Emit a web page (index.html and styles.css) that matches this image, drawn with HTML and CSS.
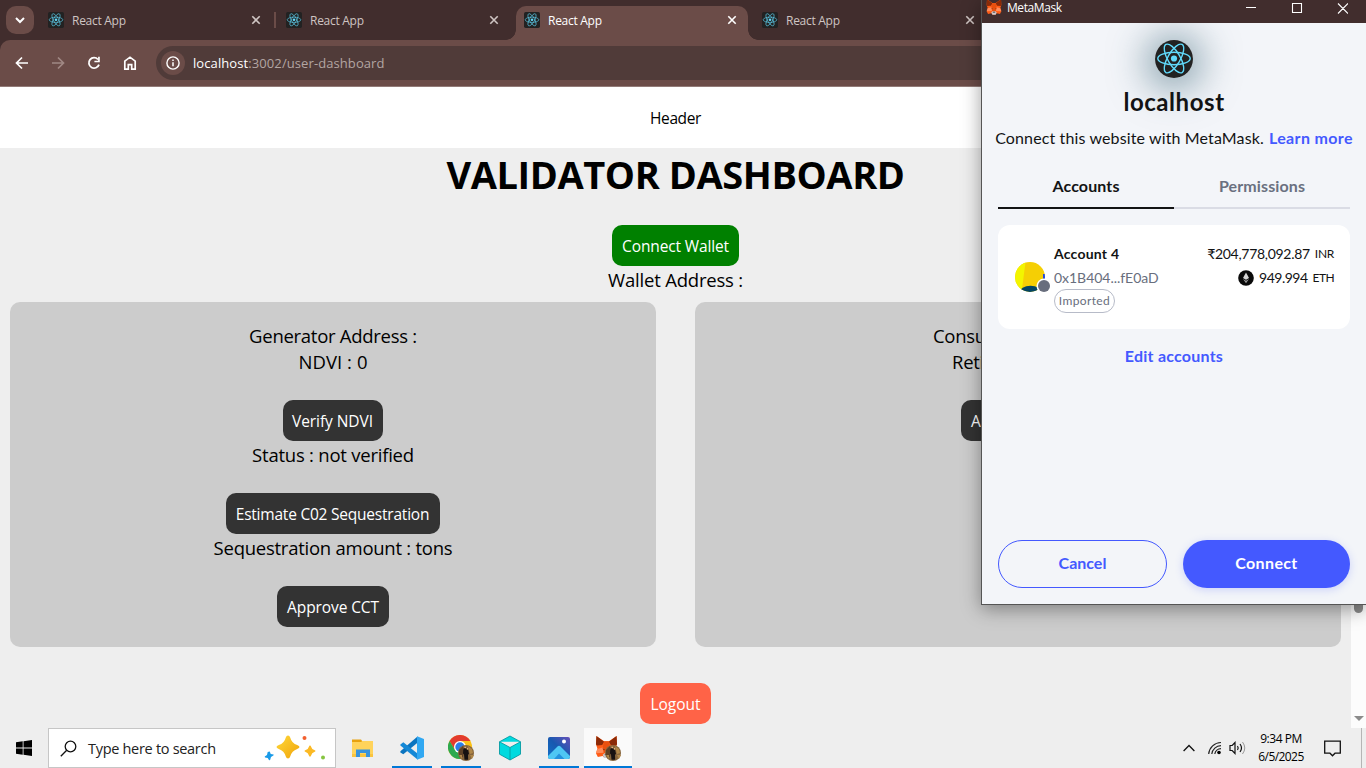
FILE: index.html
```html
<!DOCTYPE html>
<html lang="en">
<head>
<meta charset="utf-8">
<title>React App</title>
<link rel="stylesheet" href="styles.css">
</head>
<body>
<svg class="defs" width="0" height="0">
  <defs>
    <symbol id="atom" viewBox="0 0 38 38">
      <rect width="38" height="38" rx="4" fill="#222"/>
      <g fill="none" stroke="#61dafb" stroke-width="1.4">
        <ellipse cx="19" cy="18.5" rx="16.2" ry="6.2"/>
        <ellipse cx="19" cy="18.5" rx="16.2" ry="6.2" transform="rotate(60 19 18.5)"/>
        <ellipse cx="19" cy="18.5" rx="16.2" ry="6.2" transform="rotate(120 19 18.5)"/>
      </g>
      <circle cx="19" cy="18.5" r="3.1" fill="#61dafb"/>
    </symbol>
    <symbol id="x" viewBox="0 0 10 10"><path d="M1.3 1.3l7.4 7.4M8.7 1.3L1.3 8.7" fill="none" stroke="currentColor" stroke-width="1.6"/></symbol>
    <symbol id="fox" viewBox="0 0 24 24">
      <path fill="#ff5c16" d="M1.500.5L9.500 6h5L22.500.5l.5 8.500-1.500 4.500 1.500 5-2 4-5-1-2 2h-4l-2-2-5 1-2-4 1.500-5L1 9z"/>
      <path fill="#8a2a08" d="M1.500.5L9.500 6.500 7.500 10 2 10.500 1 9zM22.500.5l-8 6 2 3.500 5.500.5L23 9z"/>
      <path fill="#e8500f" d="M9.500 6h5l1.500 7-1 5H9l-1-5z"/>
      <path fill="#ff8d5d" d="M2.500 14L8 12.500 9 18l-8 .5zM21.500 14L16 12.500 15 18l8 .5z"/>
      <path fill="#c9c9ce" d="M8 20l2-1.500h4l2 1.500-1.500 3.500h-5z"/>
      <path fill="#2a1a18" d="M7.500 13.500l2.500 1v1zM16.500 13.500l-2.500 1v1zM10.500 19h3l.5 1.200h-4z"/>
    </symbol>
    <symbol id="badge" viewBox="0 0 16 16">
      <circle cx="8" cy="8" r="8" fill="#86653c"/>
      <path fill="#5c4026" d="M1 5l4-4 1 4-1 7-4-1z"/>
      <path fill="#b08748" d="M10 1l4 3 1 4-3 1zM1 10h3v4zM12 10h4l-2 4z"/>
      <path fill="#161111" d="M6 3h2l.7 1.500L10.200 5l.8 4-1 .8.2 5H6.500L6 9.500 5 8.500 5.200 5z"/>
      <path fill="#e5b080" d="M6.500 1.800H8v1.400H6.500zM9 3h1.200v1.400H9z"/>
    </symbol>
  </defs>
</svg>

<div class="desktop">
  <div class="browser">
    <div class="tabstrip">
      <div class="tab-search"><svg width="10" height="7" viewBox="0 0 10 7"><path d="M1 1l4 4 4-4" fill="none" stroke="#fff" stroke-width="2"/></svg></div>
      <div class="tab divided"><svg class="fav"><use href="#atom"/></svg><span>React App</span><svg class="close"><use href="#x"/></svg></div>
      <div class="tab"><svg class="fav"><use href="#atom"/></svg><span>React App</span><svg class="close"><use href="#x"/></svg></div>
      <div class="tab active"><svg class="fav"><use href="#atom"/></svg><span>React App</span><svg class="close"><use href="#x"/></svg></div>
      <div class="tab"><svg class="fav"><use href="#atom"/></svg><span>React App</span><svg class="close"><use href="#x"/></svg></div>
    </div>
    <div class="toolbar">
      <svg width="14" height="14" viewBox="0 0 14 14"><path d="M13 7H2M7 1.500L1.500 7 7 12.500" fill="none" stroke="#fff" stroke-width="1.700"/></svg>
      <svg width="14" height="14" viewBox="0 0 14 14"><path d="M1 7h11M7 1.500L12.500 7 7 12.500" fill="none" stroke="#a08884" stroke-width="1.700"/></svg>
      <svg width="14" height="14" viewBox="0 0 14 14"><path d="M12 8.600A5.200 5.200 0 1 1 11 3.500" fill="none" stroke="#fff" stroke-width="1.800"/><path d="M12.800 0.800v5.400H7.400v-1.500h3.700V0.800z" fill="#fff"/></svg>
      <svg width="14" height="14" viewBox="0 0 14 14"><path d="M1.800 13.200V5.200L7 1.200l5.200 4v8H8.700V8.700H5.300v4.500z" fill="none" stroke="#fff" stroke-width="1.700"/></svg>
      <div class="omnibox">
        <div class="info"><svg width="14" height="14" viewBox="0 0 14 14"><circle cx="7" cy="7" r="6.100" fill="none" stroke="#fff" stroke-width="1.400"/><path d="M7 6.200v4M7 3.500v1.500" stroke="#fff" stroke-width="1.500"/></svg></div>
        <span class="url"><b>localhost</b>:3002/user-dashboard</span>
      </div>
    </div>
  </div>

  <div class="viewport">
    <main class="page">
      <header class="header">Header</header>
      <h1 class="title">VALIDATOR DASHBOARD</h1>
      <div class="wallet">
        <button class="btn green">Connect Wallet</button>
        <p class="line l-wallet">Wallet Address :</p>
      </div>
      <div class="cards">
        <section class="card">
          <p class="line l-gen">Generator Address :</p>
          <p class="line l-ndvi">NDVI : 0</p>
          <button class="btn b-verify">Verify NDVI</button>
          <p class="line l-status">Status : not verified</p>
          <button class="btn b-est">Estimate C02 Sequestration</button>
          <p class="line l-seq">Sequestration amount : tons</p>
          <button class="btn b-appr">Approve CCT</button>
        </section>
        <section class="card">
          <p class="line cut w-consumer">Consu</p>
          <p class="line cut w-retire">Reti</p>
          <button class="btn cut w-approve">A</button>
        </section>
      </div>
      <button class="btn logout">Logout</button>
    </main>
    <div class="scrollbar"><i class="thumb"></i><i class="arrow"></i></div>
  </div>

  <footer class="taskbar">
    <div class="start"><svg width="16" height="16" viewBox="0 0 16 16"><path d="M0 2.200l6.700-.9v6.300H0zM7.500 1.200L16 0v7.600H7.500zM0 8.400h6.700v6.300L0 13.800zM7.500 8.400H16V16l-8.500-1.200z"/></svg></div>
    <div class="search">
      <svg width="17" height="17" viewBox="0 0 17 17"><circle cx="10.500" cy="6.500" r="5.300" fill="none" stroke="#111" stroke-width="1.300"/><path d="M6.700 10.300L.8 16.200" stroke="#111" stroke-width="1.300"/></svg>
      <span>Type here to search</span>
      <svg class="stars" width="62" height="28" viewBox="0 0 62 28">
        <defs><linearGradient id="gold" x1="0" y1="0" x2="1" y2="1"><stop offset="0" stop-color="#ffd93b"/><stop offset="1" stop-color="#f0a30a"/></linearGradient></defs>
        <path fill="url(#gold)" d="M24 1.500q1.600 0 2.200 2 1.600 6 7 7.500 2.300.8 2.300 2t-2.300 2q-5.400 1.800-7 7.500-.6 2-2.200 2t-2.200-2q-1.600-5.700-7-7.500-2.300-.8-2.300-2t2.300-2q5.400-1.500 7-7.500.6-2 2.200-2z"/>
        <path fill="#fbb924" d="M46 11.500q.8 0 1.100 1.200.7 2.600 3.200 3.300 1.200.4 1.200 1t-1.200 1q-2.500.8-3.200 3.400-.3 1.200-1.100 1.200t-1.100-1.200q-.7-2.600-3.200-3.400-1.200-.4-1.200-1t1.200-1q2.500-.7 3.200-3.300.3-1.200 1.100-1.200z"/>
        <path fill="#1a9be8" d="M5.800 17.500l.9 2.500 2.800.6q.6.600-.2 1L7 23l-.9 3-1 .2-1.400-2.200-2.700-.6-.3-1 2.300-1.400.7-3z"/>
        <circle cx="40.500" cy="4" r="2" fill="#f2602f"/><circle cx="59" cy="23.500" r="2" fill="#86c440"/>
      </svg>
    </div>
    <div class="apps">
      <div class="app"><svg width="24" height="24" viewBox="0 0 24 24"><path fill="#e8a20f" d="M1 3.500h9l1.500 2V9H1z"/><path fill="#ffd35b" d="M1 6h9l1.500-1H22v16H1z"/><path fill="#f9c440" d="M1 18h21v3H1z"/><path fill="#3993dc" d="M5 13.500h14V21h-4v-4H9v4H5z"/></svg></div>
      <div class="app on"><svg width="24" height="24" viewBox="0 0 24 24"><path fill="#0b74bf" d="M17.500.5v6.300L3.300 18.200.4 16.500v-1.300z"/><path fill="#1488d6" d="M.4 8.500L3.300 6.300 17.500 17.500v6L.4 9.500z"/><path fill="#31a8f2" d="M17 .3L24 3v18l-7 2.700z"/></svg></div>
      <div class="app on"><svg width="26" height="26" viewBox="0 0 26 26"><circle cx="12" cy="12" r="12" fill="#fbc116"/><path fill="#e33b2e" d="M1.600 6A12 12 0 0 1 22.400 6H12L7 15z"/><path fill="#2da94f" d="M1.600 6A12 12 0 0 0 12 24l5-9H7z"/><circle cx="12" cy="12" r="6" fill="#fff"/><circle cx="12" cy="12" r="4.700" fill="#2b7de9"/><use href="#badge" x="10" y="10" width="16" height="16"/></svg></div>
      <div class="app"><svg width="24" height="26" viewBox="0 0 24 26"><path fill="#00dadf" stroke="#069ba3" stroke-width=".9" d="M12 1l10.500 5.800v12.400L12 25 1.500 19.200V6.800zM1.500 6.800L12 12.500l10.500-5.700M12 12.500V25"/></svg></div>
      <div class="app on"><svg width="24" height="24" viewBox="0 0 24 24"><defs><linearGradient id="sky" x1="1" y1="0" x2="0" y2="1"><stop offset="0" stop-color="#6650b8"/><stop offset=".5" stop-color="#1859b0"/><stop offset="1" stop-color="#1170c8"/></linearGradient></defs><rect x="1" y="1" width="22" height="22" rx="2" fill="url(#sky)"/><path fill="#4fc7f4" d="M1 20l9.500-9.500q1.500-1.300 3 0L23 20v1q0 2-2 2H3q-2 0-2-2z"/><path fill="#2493df" d="M7 23l5-5.500 5.500 5.500z"/><circle cx="17" cy="5.500" r="2" fill="#fff"/></svg></div>
      <div class="app on focus"><svg width="26" height="26" viewBox="0 0 26 26"><use href="#fox" width="23" height="24"/><use href="#badge" x="10" y="10" width="16" height="16"/></svg></div>
    </div>
    <div class="tray">
      <svg class="up" width="12" height="8" viewBox="0 0 12 8"><path d="M.6 7L6 1.500 11.400 7" fill="none" stroke="#111" stroke-width="1.300"/></svg>
      <svg class="wifi" width="14" height="14" viewBox="0 0 14 14"><g fill="none" stroke="#222" stroke-width="1.200"><path d="M.7 13A12.500 12.500 0 0 1 13 1.500M3.800 13A9.300 9.300 0 0 1 13 4.700M6.800 13A6.300 6.300 0 0 1 13 7.700"/></g><circle cx="11" cy="11.500" r="1.800"/></svg>
      <svg class="vol" width="17" height="14" viewBox="0 0 17 14"><path d="M1 4.500h2.200L6 1.500v11l-2.800-3H1z" fill="none" stroke="#111" stroke-width="1.200"/><path d="M8.500 5q1.400 2 0 4M11 3q3 4 0 8" fill="none" stroke="#111" stroke-width="1.200"/><path d="M13.500 1q4.500 6 0 12" fill="none" stroke="#999" stroke-width="1"/></svg>
      <div class="clock"><span class="time">9:34 PM</span><span class="date">6/5/2025</span></div>
      <svg class="note" width="17" height="17" viewBox="0 0 17 17"><path d="M.7 1.200h15.600v12H11l-2.500 2.600L6 13.200H.7z" fill="none" stroke="#111" stroke-width="1.300"/></svg>
      <i class="peek"></i>
    </div>
  </footer>
</div>

<div class="popup">
  <div class="winbar">
    <svg class="wfox" width="16" height="16"><use href="#fox"/></svg><span>MetaMask</span>
    <svg class="ctl" width="102" height="11" viewBox="0 0 102 11"><path d="M0 4.500h10M46.500.5h9v9h-9zM92 .5l10 10M102 .5l-10 10" fill="none" stroke="#fff" stroke-width="1.100"/></svg>
  </div>
  <div class="site">
    <div class="glow"><svg class="logo"><use href="#atom"/></svg></div>
    <h2>localhost</h2>
    <p class="ask"><span>Connect this website with MetaMask.</span> <a>Learn more</a></p>
  </div>
  <div class="ptabs"><div class="ptab sel">Accounts</div><div class="ptab">Permissions</div></div>
  <div class="acct">
    <div class="avatar">
      <svg width="38" height="34" viewBox="0 0 38 34"><defs><clipPath id="round"><circle cx="15" cy="15" r="15"/></clipPath></defs><g clip-path="url(#round)"><rect width="32" height="32" fill="#f5cf04"/><path d="M0 0h10.500L6.500 31H0z" fill="#f3f500"/><path d="M28 12h4v7h-4z" fill="#2349e0"/><ellipse cx="15.500" cy="30.500" rx="11" ry="6.800" fill="#024563"/></g><circle cx="29" cy="24" r="7.500" fill="#fff"/><circle cx="29" cy="24" r="6" fill="#686e7d"/></svg>
    </div>
    <div class="who"><b>Account 4</b><span class="addr">0x1B404...fE0aD</span><span class="pill">Imported</span></div>
    <div class="bal">
      <div><span class="inr">₹204,778,092.87</span><small>INR</small></div>
      <div><svg width="16" height="16" viewBox="0 0 16 16"><circle cx="8" cy="8" r="7.800" fill="#0a0a0a"/><path fill="#d5d5d5" d="M8 2.500L11 8 8 9.800 5 8z"/><path fill="#999" d="M5 9l3 1.800L11 9l-3 4.300z"/></svg><span class="eth">949.994</span><small class="e">ETH</small></div>
    </div>
  </div>
  <a class="edit">Edit accounts</a>
  <div class="actions"><button class="pbtn ghost">Cancel</button><button class="pbtn solid">Connect</button></div>
</div>
</body>
</html>
```
FILE: styles.css
```css
*{box-sizing:border-box}
body{margin:0;width:1366px;height:768px;overflow:hidden;font-family:"Open Sans","Noto Sans",sans-serif;color:#000;background:#eee}
h1,h2,p{margin:0}
button{border:0;font-family:inherit;white-space:nowrap;padding:0}
svg{flex:none;display:block}
.defs{position:absolute}
.desktop{display:flex;flex-direction:column;height:768px}

/* browser frame */
.browser{flex:none;height:87px;background:#412d2d}
.tabstrip{height:40px;display:flex;padding:6px 0 0 6px}
.tab-search{width:28px;height:28px;border-radius:10px;background:#6b4c48;display:flex;align-items:center;justify-content:center;margin-right:6px}
.tab{flex:none;position:relative;width:232px;margin-right:6px;height:34px;display:flex;align-items:center;padding:0 11px 6px 8px;font-size:12px;letter-spacing:-.28px;color:#cfc5c3}
.tab span{flex:1;margin-left:8px}
.tab.divided::after{content:"";position:absolute;right:-4px;top:6px;width:2px;height:16px;background:#6b4c48}
.fav{width:16px;height:16px}
.close{width:10px;height:10px}
.tab.active{background:#6b4c48;color:#fff;border-radius:10px 10px 0 0}
.tab.active::before,.tab.active::after{content:"";position:absolute;bottom:0;width:10px;height:10px}
.tab.active::before{left:-10px;background:radial-gradient(circle at 0 0,transparent 9.500px,#6b4c48 10px)}
.tab.active::after{right:-10px;background:radial-gradient(circle at 100% 0,transparent 9.500px,#6b4c48 10px)}
.toolbar{height:47px;background:#6b4c48;border-bottom:1px solid #927b78;border-radius:10px 0 0 0;display:flex;align-items:center;gap:22px;padding-left:15px}
.omnibox{flex:1;height:34px;border-radius:17px 0 0 17px;background:#503b39;display:flex;align-items:center;padding-left:5px;margin-left:-3px}
.info{width:24px;height:24px;border-radius:50%;background:#6b4c48;display:flex;align-items:center;justify-content:center}
.url{margin-left:8px;font-size:13px;letter-spacing:.09px;color:#b3a5a2}
.url b{font-weight:400;color:#fff}

/* page */
.viewport{flex:1;display:flex;min-height:0}
.page{width:1351px;display:flex;flex-direction:column;align-items:center;background:#eee}
.header{align-self:stretch;height:61px;line-height:63px;background:#fff;text-align:center;font-size:15.500px;letter-spacing:-.4px}
.title{font-size:38px;line-height:52px;letter-spacing:-.42px}
.wallet{margin-top:25px;display:flex;flex-direction:column;align-items:center;height:77px}
.btn{flex:none;height:41px;border-radius:10px;background:#333;color:#fff;font-size:15.500px;line-height:41px;padding:1px 10px 0;letter-spacing:-.2px}
.green{background:green;width:127px;letter-spacing:-.14px}
.line{font-size:18.500px;line-height:26px;height:26px;white-space:nowrap;padding-top:1px}
.l-wallet{letter-spacing:-.2px}
.l-gen{letter-spacing:-.28px}
.l-ndvi{margin-bottom:26px;letter-spacing:.06px}
.l-status{letter-spacing:-.23px;margin-bottom:26px}
.l-seq{letter-spacing:-.25px;margin-bottom:26px}
.b-verify{width:100px;letter-spacing:-.07px;padding-left:9px}
.b-est{width:214px;letter-spacing:-.22px;padding-left:9px}
.b-appr{width:112px;letter-spacing:-.1px}
.cards{align-self:stretch;display:flex;justify-content:space-between;padding:0 10px;height:345px}
.card{width:646px;border-radius:10px;background:#ccc;padding-top:20px;display:flex;flex-direction:column;align-items:center}
.cut{text-align:left}
.w-consumer{width:170px;letter-spacing:-.28px}
.w-retire{width:132px;margin-bottom:26px;letter-spacing:-.28px}
.w-approve{width:114px}
.logout{background:tomato;margin-top:36px;width:71px;letter-spacing:0}
.scrollbar{width:15px;background:#fcfcfc;display:flex;flex-direction:column;align-items:center}
.thumb{width:9px;height:510px;margin-top:16px;border-radius:5px;background:#8b8b8b}
.arrow{margin-top:auto;margin-bottom:7px;border:5px solid transparent;border-top-color:#8b8b8b;border-bottom:0}

/* taskbar */
.taskbar{height:40px;flex:none;background:#eee;display:flex}
.start{width:48px;display:flex;align-items:center;justify-content:center}
.search{width:288px;height:40px;border:1px solid #c6c6c6;background:#fff;display:flex;align-items:center;padding-left:11px;font-size:14.500px;letter-spacing:-.3px;color:#222}
.search span{margin-left:11px;white-space:nowrap}
.stars{margin:0 9px 0 auto}
.apps{display:flex;padding-left:3px;gap:1px}
.app{width:48px;height:40px;display:flex;align-items:center;justify-content:center;position:relative}
.app.on::after{content:"";position:absolute;left:4px;right:4px;bottom:0;height:2px;background:#0078d7}
.app.focus{background:#fafafa}
.app.focus::after{left:0;right:0}
.tray{margin-left:auto;display:flex;align-items:center;height:40px}
.wifi{margin-left:13px}
.vol{margin-left:7px}
.clock{width:50px;margin:0 0 0 10px;display:flex;flex-direction:column;align-items:center;font-size:12px;line-height:18px;white-space:nowrap}
.time{letter-spacing:-.48px}
.date{letter-spacing:-.57px}
.note{margin-left:18px}
.peek{margin-left:20px;width:1px;height:40px;background:#b5b5b5;margin-right:4px}

/* wallet window floating over the desktop */
.popup{position:absolute;left:981px;top:0;width:385px;height:605px;border-left:1px solid #555;border-bottom:1px solid #555;background:#f3f5f9;box-shadow:0 4px 18px rgba(0,0,0,.38);display:flex;flex-direction:column;font-family:Lato,"Open Sans",sans-serif;color:#121314}
.winbar{flex:none;height:23px;background:#412d2d;color:#fff;font:12px/16px "Open Sans",sans-serif;letter-spacing:-.42px;display:flex;padding-left:4px;position:relative;z-index:1}
.wfox{margin-top:-1px}
.winbar span{margin-left:5px}
.ctl{margin:3px 18px 0 auto}
.site{display:flex;flex-direction:column;align-items:center;padding-top:17px}
.glow{width:38px;height:38px;border-radius:50%;box-shadow:0 3px 36px 10px rgba(45,92,112,.5)}
.logo{width:38px;height:38px;border-radius:50%}
.site h2{font-size:24px;font-weight:700;line-height:32px;margin-top:8px;letter-spacing:.55px;position:relative}
.ask{display:flex;gap:5px;font-size:16px;line-height:24px;margin-top:8px;letter-spacing:.13px;white-space:nowrap}
.ask a,.edit{color:#4459ff;font-weight:700}
.ask a{letter-spacing:.36px}
.ptabs{display:flex;margin:20px 16px 0;height:39px;flex:none}
.ptab{flex:1;text-align:center;font-size:16px;font-weight:700;line-height:32px;color:#6a7080;letter-spacing:.12px;border-bottom:2px solid #dadce5}
.ptab.sel{color:#121314;border-color:#121314}
.acct{flex:none;margin:16px 16px 0;height:104px;border-radius:12px;background:#fff;display:flex;padding:17px 16px}
.avatar{width:40px;padding:20px 0 0 1px}
.who{display:flex;flex-direction:column;align-items:flex-start;font-size:14px;line-height:24px}
.who b{letter-spacing:.22px}
.addr{color:#686e7d;letter-spacing:-.03px}
.pill{height:24px;width:61px;border:1px solid #b7bbc8;border-radius:12px;font-size:12px;line-height:22px;text-align:center;color:#686e7d;letter-spacing:.38px;margin-top:-1px}
.bal{margin-left:auto;font-size:14px;line-height:24px;padding-top:0}
.bal div{display:flex;align-items:center;justify-content:flex-end;height:24px}
.inr{letter-spacing:-.29px}
.eth{letter-spacing:-.5px;margin-left:5px}
.bal small{font-size:12px;margin-left:5px;letter-spacing:-.3px}
.bal small.e{letter-spacing:-.6px}
.edit{align-self:center;font-size:16px;line-height:24px;margin-top:15px;letter-spacing:.23px}
.actions{margin:auto 16px 16px;display:flex;gap:16px}
.pbtn{height:48px;border-radius:24px;font-size:16px;font-weight:700;line-height:46px;padding-bottom:2px}
.ghost{width:169px;border:1px solid #4459ff;background:none;color:#4459ff;line-height:44px}
.solid{width:167px;background:#4459ff;color:#fff;letter-spacing:.36px;box-shadow:0 2px 8px rgba(68,89,255,.22)}
```
